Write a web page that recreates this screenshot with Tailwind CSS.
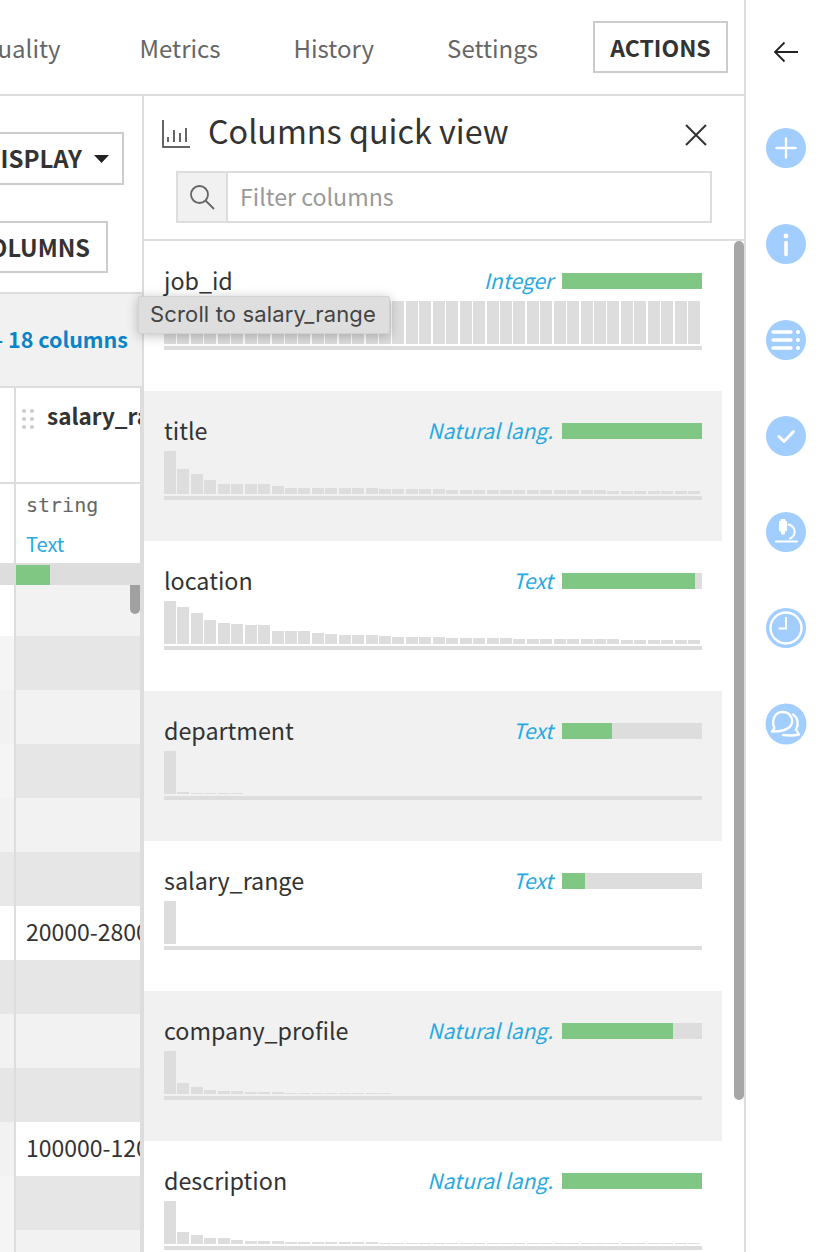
<!DOCTYPE html>
<html lang="en">
<head>
    <meta charset="UTF-8">
    <title>Columns quick view</title>
    <script src="https://cdn.jsdelivr.net/npm/@tailwindcss/browser@4"></script>
</head>
<body class="bg-white">
<div class="relative flex w-[822px] h-[1252px] overflow-hidden bg-white text-[#333] font-['Noto_Sans_CJK_SC','Source_Sans_Pro',sans-serif]">

    <!-- Main area -->
    <div class="flex flex-col w-[746px] h-full border-r-2 border-[#ddd]">

        <!-- Top tabs -->
        <div class="flex items-center justify-end shrink-0 h-[96px] border-b-2 border-[#ddd] pr-[16px] overflow-hidden">
            <div class="flex items-center text-[24px] text-[#666] whitespace-nowrap pt-[2px]">
                <span class="mr-[79px]">Data Quality</span>
                <span class="mr-[73px]">Metrics</span>
                <span class="mr-[73px]">History</span>
                <span class="mr-[55px]">Settings</span>
            </div>
            <button class="flex items-center justify-center shrink-0 w-[135px] h-[52px] border-2 border-[#ccc] text-[23px] font-semibold text-[#333] whitespace-nowrap">ACTIONS</button>
        </div>

        <div class="flex flex-1 min-h-0">

            <!-- Dataset table, cut off by the panel -->
            <div class="flex flex-col w-[144px] shrink-0 border-r-2 border-[#ddd] overflow-hidden">
                <div class="flex flex-col items-end shrink-0 h-[196px] pt-[36px]">
                    <button class="flex items-center justify-end shrink-0 w-[200px] h-[53px] mr-[18px] border-2 border-[#ccc] pr-[13px] pb-[2px] text-[24px] font-semibold whitespace-nowrap">DISPLAY
                        <svg class="ml-[12px] mt-[2px]" width="15" height="8" viewBox="0 0 15 8"><path d="M0 0h15L7.500 8z" fill="#222"/></svg>
                    </button>
                    <button class="flex items-center justify-end shrink-0 w-[200px] h-[52px] mt-[36px] mr-[34px] border-2 border-[#ccc] pr-[16px] pt-[1px] text-[23.500px] font-semibold whitespace-nowrap">COLUMNS</button>
                </div>
                <div class="flex items-center justify-end shrink-0 h-[96px] bg-[#f1f1f1] border-t-2 border-b-2 border-[#ddd] pr-[14px] pb-[2px] text-[21.500px] font-semibold text-[#0a84c8] whitespace-nowrap">– 18 columns</div>

                <div class="w-[142px] border-r-2 border-[#ddd] flex-1 min-h-0 overflow-hidden">
                    <!-- header cell -->
                    <div class="flex h-[96px] border-b-2 border-[#ddd]">
                        <div class="w-[16px] shrink-0 border-r-2 border-[#ddd]"></div>
                        <div class="flex items-start pt-[15px] pl-[6px] overflow-hidden">
                            <div class="grid grid-cols-2 gap-x-[4px] gap-y-[4px] mt-[6px] shrink-0">
                                <i class="size-[4px] rounded-full bg-[#ccc]"></i><i class="size-[4px] rounded-full bg-[#ccc]"></i>
                                <i class="size-[4px] rounded-full bg-[#ccc]"></i><i class="size-[4px] rounded-full bg-[#ccc]"></i>
                                <i class="size-[4px] rounded-full bg-[#ccc]"></i><i class="size-[4px] rounded-full bg-[#ccc]"></i>
                            </div>
                            <span class="ml-[13px] text-[22.500px] leading-[24px] font-semibold whitespace-nowrap">salary_range</span>
                        </div>
                    </div>
                    <!-- meta cell -->
                    <div class="flex h-[79px]">
                        <div class="w-[16px] shrink-0 border-r-2 border-[#ddd]"></div>
                        <div class="pl-[10px] pt-[7px]">
                            <div class="font-['DejaVu_Sans_Mono',monospace] text-[20px] leading-[28px] text-[#666]">string</div>
                            <div class="mt-[13px] text-[20px] leading-[24px] text-[#29a9e0]">Text</div>
                        </div>
                    </div>
                    <!-- quality bar -->
                    <div class="flex h-[22px] bg-[#ddd] pl-[16px] pt-[2px]">
                        <div class="w-[34px] bg-[#81c784]"></div>
                    </div>
                    <div id="tableRows" class="relative"></div>
                </div>
            </div>

            <!-- Columns quick view -->
            <div class="flex flex-col flex-1 min-w-0">
                <div class="shrink-0 h-[145px] border-b-2 border-[#ddd]">
                    <div class="flex items-center h-[75px] pl-[18px] pr-[37px]">
                        <svg width="28" height="28" viewBox="0 0 28 28" fill="none" stroke="#333" stroke-width="1.500">
                            <path d="M1 0v27h27"/><path d="M6 22v-5M12 22v-12M18 22v-9M24 22v-14"/>
                        </svg>
                        <h1 class="ml-[18px] -mt-[7px] text-[32.300px] leading-[40px] whitespace-nowrap">Columns quick view</h1>
                        <svg class="ml-auto mt-[3px]" width="22" height="22" viewBox="0 0 22 22" fill="none" stroke="#333" stroke-width="2"><path d="M1 1l20 20M21 1L1 21"/></svg>
                    </div>
                    <div class="flex h-[52px] ml-[32px] w-[536px] border-2 border-[#ddd]">
                        <div class="flex items-center justify-center w-[50px] shrink-0 bg-[#f1f1f1] border-r-2 border-[#ddd]">
                            <svg width="26" height="26" viewBox="0 0 26 26" fill="none" stroke="#666" stroke-width="1.800"><circle cx="10.500" cy="10.500" r="8.500"/><path d="M16.500 16.500L25 25"/></svg>
                        </div>
                        <div class="flex items-center pl-[12px] pb-[1px] text-[23.200px] text-[#999]">Filter columns</div>
                    </div>
                </div>
                <div class="relative flex-1 min-h-0 overflow-hidden">
                    <div id="columnList" class="w-[578px]"></div>
                    <div class="absolute top-0 right-0 w-[10px] h-[859px] rounded-[5px] bg-[#a6a6a6]"></div>
                </div>
            </div>
        </div>
    </div>

    <!-- Right rail -->
    <div class="flex flex-col items-center w-[76px] shrink-0 pl-[4px]">
        <svg class="mt-[41px] mb-[65px]" width="26" height="22" viewBox="0 0 26 22" fill="none" stroke="#222" stroke-width="1.800"><path d="M25 11H2M11.500 1.500L2 11l9.500 9.500"/></svg>
        <div class="flex flex-col gap-[56px]">
            <svg width="40" height="40" viewBox="0 0 40 40"><circle cx="20" cy="20" r="20" fill="#a1cdff"/><path d="M20 10.500v19M10.500 20h19" stroke="#fff" stroke-width="2.400" stroke-linecap="round"/></svg>
            <svg width="40" height="40" viewBox="0 0 40 40"><circle cx="20" cy="20" r="20" fill="#a1cdff"/><circle cx="20" cy="12" r="2.400" fill="#fff"/><path d="M20 18.500v12" stroke="#fff" stroke-width="3.600" stroke-linecap="round"/></svg>
            <svg width="40" height="40" viewBox="0 0 40 40"><circle cx="20" cy="20" r="20" fill="#a1cdff"/><path d="M7 12h18M7 20h18M7 28h18" stroke="#fff" stroke-width="3.400" stroke-linecap="round"/><circle cx="32" cy="12" r="2" fill="#fff"/><circle cx="32" cy="20" r="2" fill="#fff"/><circle cx="32" cy="28" r="2" fill="#fff"/></svg>
            <svg width="40" height="40" viewBox="0 0 40 40"><circle cx="20" cy="20" r="20" fill="#a1cdff"/><path d="M13 20.500l5 5 9.500-10" fill="none" stroke="#fff" stroke-width="3" stroke-linecap="round" stroke-linejoin="round"/></svg>
            <svg width="40" height="40" viewBox="0 0 40 40"><circle cx="20" cy="20" r="20" fill="#a1cdff"/><path d="M15 7.500h4v2h1.500v9h-1.500l-.7 3.500h-2.600l-.7-3.500h-1.500v-9h1.500z" fill="#fff" stroke="#fff" stroke-linejoin="round"/><path d="M22.500 12.500c5 1 7.500 6 5.500 10.500-1 2-2.500 3-4 3.500M10 29.500h21" fill="none" stroke="#fff" stroke-width="2" stroke-linecap="round"/></svg>
            <svg width="40" height="40" viewBox="0 0 40 40"><circle cx="20" cy="20" r="20" fill="#a1cdff"/><circle cx="20" cy="20" r="15.500" fill="none" stroke="#fff" stroke-width="2.400"/><path d="M20 9v11.500h-7.500" fill="none" stroke="#fff" stroke-width="2"/></svg>
            <svg width="42" height="42" viewBox="0 0 42 42" class="-mx-[1px] -my-[1px]"><circle cx="21" cy="21" r="20.500" fill="#a1cdff"/><path d="M7 28.500l2.500-3.500c-3-6 -1-16 8-16 9 0 11.500 9 8 14-3 4.500-9 5.500-18.500 5.500z" fill="none" stroke="#fff" stroke-width="2.400" stroke-linejoin="round"/><path d="M28 11.500c5 3 6 10 3 15l3 5c-6 1.500-12 1-16 .5" fill="none" stroke="#fff" stroke-width="2.400" stroke-linejoin="round" stroke-linecap="round"/></svg>
        </div>
    </div>

    <!-- Tooltip -->
    <div class="absolute left-[138px] top-[296px] flex items-center w-[252px] h-[38px] pl-[11px] pb-[1px] rounded-[2px] bg-[#dedede] border border-[#d2d2d2] shadow-[0_2px_12px_rgba(0,0,0,0.25)] font-['Inter',sans-serif] text-[22px] tracking-[0.15px] text-[#444] whitespace-nowrap">Scroll to salary_range</div>
</div>

<script>
    const columns = [
        { name: 'job_id', type: 'Integer', ok: 140, bars: Array(40).fill(43) },
        { name: 'title', type: 'Natural lang.', ok: 140, bars: [43,25,20,14,10,10,10,10,8,6,6,6,6,6,6,6,5,5,5,5,5,4,4,4,4,4,4,4,4,4,4,4,4,3,3,3,3,3,3,3] },
        { name: 'location', type: 'Text', ok: 133, bars: [43,37,31,24,21,20,19,19,13,13,13,11,10,9,9,9,8,7,7,7,7,6,6,6,6,6,5,5,5,5,5,5,5,5,4,4,4,4,4,4] },
        { name: 'department', type: 'Text', ok: 50, bars: [43,2,1.500,1.500,1,1] },
        { name: 'salary_range', type: 'Text', ok: 23, bars: [43] },
        { name: 'company_profile', type: 'Natural lang.', ok: 111, bars: [43,11,7,4,3,3,2,2,2,1,1,1,1,1,1,1,1] },
        { name: 'description', type: 'Natural lang.', ok: 140, bars: [43,12,9,6,6,4,3,3,3,2,2,2,2,2,2,2,1,1,1,1,1,1,1,1,1,1,1,1,1,1,1,1,1,1,1,1,1,1,1,1] }
    ];

    const list = document.getElementById('columnList');
    columns.forEach((col, index) => {
        const row = document.createElement('div');
        row.className = index % 2 ? 'h-[150px] bg-[#f1f1f1] pl-[20px] pr-[20px] pt-[24px]' : 'h-[150px] bg-white pl-[20px] pr-[20px] pt-[24px]';
        const bars = col.bars.map(h => `<div class="w-[12px] bg-[#ddd]" style="height:${h}px"></div>`).join('');
        row.innerHTML = `
            <div class="flex items-center h-[32px]">
                <span class="-mt-[2px] text-[23.300px] leading-[32px]">${col.name}</span>
                <span class="ml-auto text-[21px] italic text-[#29a9e0] whitespace-nowrap">${col.type}</span>
                <div class="w-[140px] h-[16px] ml-[9px] bg-[#ddd]"><div class="h-full bg-[#81c784]" style="width:${col.ok}px"></div></div>
            </div>
            <div class="flex items-end gap-x-[1.450px] h-[43px] mt-[4px]">${bars}</div>
            <div class="h-[4px] mt-[2px] bg-[#ddd]"></div>`;
        list.appendChild(row);
    });

    const tableRows = document.getElementById('tableRows');
    const rows = [
        ['', 'bg-white', 'bg-[#f2f2f2]'],
        ['', 'bg-[#f5f5f5]', 'bg-[#e6e6e6]'],
        ['', 'bg-[#f2f2f2]', 'bg-[#f2f2f2]'],
        ['', 'bg-[#f5f5f5]', 'bg-[#e6e6e6]'],
        ['', 'bg-[#f2f2f2]', 'bg-[#f2f2f2]'],
        ['', 'bg-[#e8e8e8]', 'bg-[#e6e6e6]'],
        ['20000-28000', 'bg-white', 'bg-white'],
        ['', 'bg-[#e6e6e6]', 'bg-[#e6e6e6]'],
        ['', 'bg-[#f2f2f2]', 'bg-[#f2f2f2]'],
        ['', 'bg-[#e6e6e6]', 'bg-[#e6e6e6]'],
        ['100000-120000', 'bg-[#f2f2f2]', 'bg-white'],
        ['', 'bg-[#f5f5f5]', 'bg-[#e6e6e6]'],
        ['', 'bg-[#f5f5f5]', 'bg-[#f2f2f2]']
    ];
    rows.forEach(([value, side, main], index) => {
        const row = document.createElement('div');
        row.className = index === 0 ? 'flex h-[51px]' : 'flex h-[54px]';
        row.innerHTML = `<div class="w-[16px] shrink-0 border-r-2 border-[#ddd] ${side}"></div>
            <div class="flex items-center flex-1 pl-[10px] pb-[3px] text-[23px] whitespace-nowrap overflow-hidden ${main}">${value}</div>`;
        tableRows.appendChild(row);
    });
    const thumb = document.createElement('div');
    thumb.className = 'absolute top-0 right-0 w-[10px] h-[29px] rounded-b-[5px] bg-[#a0a0a0]';
    tableRows.appendChild(thumb);
</script>
</body>
</html>
